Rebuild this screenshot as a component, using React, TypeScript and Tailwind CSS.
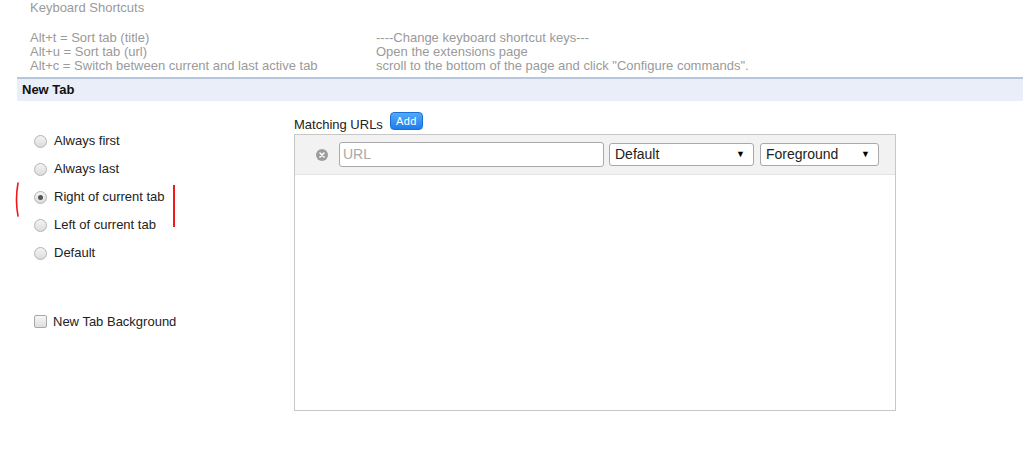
const font = { fontFamily: '"Liberation Sans", Arial, sans-serif' };

function Radio({ label, checked }: { label: string; checked?: boolean }) {
  return (
    <div className="flex h-[28px] items-center">
      <span className="flex h-[13px] w-[13px] items-center justify-center rounded-full border border-[#b4b4b4] bg-gradient-to-b from-[#f4f4f4] to-[#dcdcdc]">
        {checked && <span className="h-[5px] w-[5px] rounded-full bg-[#555]" />}
      </span>
      <span className="ml-[7px] text-[13px] text-[#222]">{label}</span>
    </div>
  );
}

function Select({ value, width }: { value: string; width: string }) {
  return (
    <div className={`flex h-[23px] items-center justify-between rounded-[3px] border border-[#a9a9a9] bg-white pl-[5px] pr-[8px] text-[14px] text-[#222] ${width}`}>
      <span>{value}</span>
      <span className="text-[9px] text-black">▼</span>
    </div>
  );
}

export default function App() {
  return (
    <div className="relative h-[452px] w-[1023px] overflow-hidden bg-white" style={font}>
      {/* keyboard shortcuts */}
      <div className="pl-[30px] text-[13px] leading-[14px] text-[#9a9a9a]">
        <div className="pt-[1px]">Keyboard Shortcuts</div>
        <div className="mt-[16px] flex">
          <div className="w-[346px]">
            <div>Alt+t = Sort tab (title)</div>
            <div>Alt+u = Sort tab (url)</div>
            <div>Alt+c = Switch between current and last active tab</div>
          </div>
          <div>
            <div>----Change keyboard shortcut keys---</div>
            <div>Open the extensions page</div>
            <div>scroll to the bottom of the page and click "Configure commands".</div>
          </div>
        </div>
      </div>

      <div className="ml-[17px] mt-[4px] flex h-[24px] items-center border-t-2 border-[#b7c6db] bg-[#e9eef9] pl-[5px] text-[13px] font-bold text-[#111]">
        New Tab
      </div>

      <div className="flex">
        {/* left options */}
        <div className="w-[294px] pl-[34px] pt-[26px]">
          <Radio label="Always first" />
          <Radio label="Always last" />
          <Radio label="Right of current tab" checked />
          <Radio label="Left of current tab" />
          <Radio label="Default" />
          <div className="mt-[45px] flex items-center">
            <span className="h-[13px] w-[13px] rounded-[2px] border border-[#a9a9a9] bg-gradient-to-b from-[#f6f6f6] to-[#dedede]" />
            <span className="ml-[6px] text-[13px] text-[#222]">New Tab Background</span>
          </div>
        </div>

        {/* matching urls */}
        <div className="pt-[11px]">
          <div className="flex h-[22px] items-end">
            <span className="pb-[1px] text-[13px] leading-[16px] text-[#222]">Matching URLs</span>
            <span className="mb-[4px] ml-[7px] self-start rounded-[4px] border border-[#1d6fd6] bg-gradient-to-b from-[#52a9fa] to-[#1c7ded] px-[5px] text-[11px] leading-[16px] tracking-[0.5px] text-white">
              Add
            </span>
          </div>
          <div className="h-[277px] w-[602px] border border-[#c8c8c8]">
            <div className="flex h-[40px] items-center border-b border-[#e4e4e4] bg-[#f2f2f2] pl-[21px]">
              <span className="flex h-[12px] w-[12px] items-center justify-center rounded-full bg-[#9c9c9c]">
                <svg width="6" height="6" viewBox="0 0 6 6">
                  <path d="M1 1L5 5M5 1L1 5" stroke="white" strokeWidth="1.6" strokeLinecap="round" />
                </svg>
              </span>
              <div className="ml-[11px] flex h-[25px] w-[265px] items-center rounded-[3px] border border-[#a9a9a9] bg-white pl-[3px] text-[14px] text-[#a9a9a9]">
                URL
              </div>
              <div className="ml-[5px]">
                <Select value="Default" width="w-[145px]" />
              </div>
              <div className="ml-[6px]">
                <Select value="Foreground" width="w-[119px]" />
              </div>
            </div>
          </div>
        </div>
      </div>

      {/* red annotation marks */}
      <svg className="absolute left-0 top-0" width="200" height="240" viewBox="0 0 200 240">
        <path d="M18 183 Q15 200 18 216" stroke="#f01818" strokeWidth="1.6" fill="none" strokeLinecap="round" />
        <path d="M174 185 L174 227" stroke="#f01818" strokeWidth="2" fill="none" />
      </svg>
    </div>
  );
}
